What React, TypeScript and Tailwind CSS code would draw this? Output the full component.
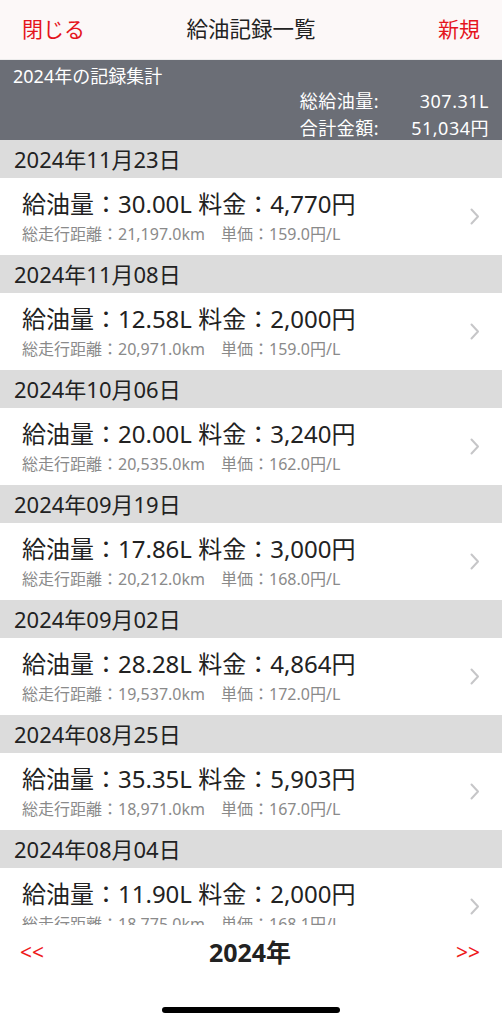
import React from "react";

const records = [
  { date: "2024年11月23日", liters: "30.00L", price: "4,770円", odo: "21,197.0km", unit: "159.0円/L" },
  { date: "2024年11月08日", liters: "12.58L", price: "2,000円", odo: "20,971.0km", unit: "159.0円/L" },
  { date: "2024年10月06日", liters: "20.00L", price: "3,240円", odo: "20,535.0km", unit: "162.0円/L" },
  { date: "2024年09月19日", liters: "17.86L", price: "3,000円", odo: "20,212.0km", unit: "168.0円/L" },
  { date: "2024年09月02日", liters: "28.28L", price: "4,864円", odo: "19,537.0km", unit: "172.0円/L" },
  { date: "2024年08月25日", liters: "35.35L", price: "5,903円", odo: "18,971.0km", unit: "167.0円/L" },
  { date: "2024年08月04日", liters: "11.90L", price: "2,000円", odo: "18,775.0km", unit: "168.1円/L" },
];

function Chevron() {
  return (
    <svg width="10" height="17" viewBox="0 0 10 17" fill="none">
      <path d="M1.5 1.5 L8 8.5 L1.5 15.5" stroke="#c6c6c8" strokeWidth="2" strokeLinecap="round" strokeLinejoin="round" />
    </svg>
  );
}

export default function App() {
  return (
    <div
      className="w-[502px] h-[1024px] bg-white flex flex-col overflow-hidden text-[#222]"
      style={{ fontFamily: "'Noto Sans', 'Noto Sans CJK JP', sans-serif" }}
    >
      {/* Nav bar */}
      <header className="h-[60px] flex-shrink-0 bg-[#fcf8f8] grid grid-cols-[1fr_auto_1fr] items-center px-[22px] border-b border-[#ececec]">
        <span className="text-[21px] text-[#e5141c]">閉じる</span>
        <span className="text-[21.5px] text-[#222]">給油記録一覧</span>
        <span className="text-[21px] text-[#e5141c] text-right">新規</span>
      </header>

      {/* Scroll area */}
      <div className="h-[865px] flex-shrink-0 overflow-hidden">
        <section className="h-[80px] bg-[#6b6e76] text-white px-[13px] pt-[5px]">
          <p className="text-[18px] leading-[23px]">2024年の記録集計</p>
          <div className="flex justify-end">
            <div className="grid grid-cols-[auto_auto] text-[18px] leading-[27px] tracking-[0.5px]">
              <span>総給油量:</span>
              <span className="text-right pl-[32px]">307.31L</span>
              <span>合計金額:</span>
              <span className="text-right pl-[32px]">51,034円</span>
            </div>
          </div>
        </section>

        {records.map((r, idx) => (
          <div key={idx}>
            <div className="h-[38px] bg-[#dcdcdc] flex items-center px-[14px] text-[22px] leading-[28px]">{r.date}</div>
            <div className="h-[77px] bg-white flex items-center pl-[22px] pr-[22px]">
              <div className="flex-1 self-start pt-[12px]">
                <p className="text-[24px] leading-[28px] text-[#222]">
                  給油量：{r.liters} 料金：{r.price}
                </p>
                <p className="text-[16px] leading-[20px] mt-[6px] text-[#8a8a8a]">
                  総走行距離：{r.odo}　単価：{r.unit}
                </p>
              </div>
              <Chevron />
            </div>
          </div>
        ))}
      </div>

      {/* Year pager */}
      <div className="flex-1 flex flex-col">
        <div className="h-[56px] flex items-center justify-between pl-[20px] pr-[22px]">
          <span className="text-[21px] text-[#ee1b1b]">&lt;&lt;</span>
          <span className="text-[25px] font-bold text-[#222]">2024年</span>
          <span className="text-[21px] text-[#ee1b1b]">&gt;&gt;</span>
        </div>
        <div className="flex-1 flex items-end justify-center pb-[11px]">
          <div className="w-[178px] h-[6px] rounded-full bg-black" />
        </div>
      </div>
    </div>
  );
}
